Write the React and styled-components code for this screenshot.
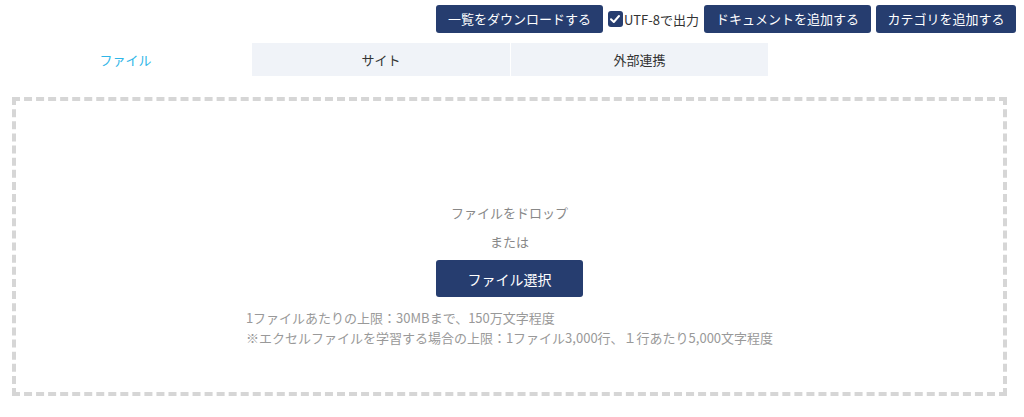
import styled, { createGlobalStyle } from 'styled-components';

const GlobalStyle = createGlobalStyle`
  body {
    margin: 0;
    background: #fff;
    font-family: "Noto Sans CJK JP", "Noto Sans", sans-serif;
    color: #333;
  }
`;

const App = () => {
  return (
    <Page>
      <GlobalStyle />
      <Toolbar>
        <NavButton $w={167}>一覧をダウンロードする</NavButton>
        <CheckLabel>
          <CheckBox>
            <svg width="12" height="12" viewBox="0 0 12 12">
              <path d="M2 6.2 L4.8 9 L10 3" fill="none" stroke="#fff" strokeWidth="2" strokeLinecap="round" strokeLinejoin="round" />
            </svg>
          </CheckBox>
          UTF-8で出力
        </CheckLabel>
        <NavButton $w={167}>ドキュメントを追加する</NavButton>
        <NavButton $w={140}>カテゴリを追加する</NavButton>
      </Toolbar>

      <Tabs>
        <Tab $active>ファイル</Tab>
        <Tab>サイト</Tab>
        <Tab>外部連携</Tab>
      </Tabs>

      <DropZone>
        <DropText>ファイルをドロップ</DropText>
        <DropText $gap>または</DropText>
        <SelectButton>ファイル選択</SelectButton>
        <Notes>
          <div>1ファイルあたりの上限：30MBまで、150万文字程度</div>
          <div>※エクセルファイルを学習する場合の上限：1ファイル3,000行、１行あたり5,000文字程度</div>
        </Notes>
      </DropZone>
    </Page>
  );
};

export default App;

const Page = styled.div`
  width: 1024px;
  height: 417px;
  overflow: hidden;
`;

const Toolbar = styled.div`
  display: flex;
  justify-content: flex-end;
  align-items: center;
  gap: 5px;
  padding: 5px 8px 0 0;
  height: 28px;
`;

const NavButton = styled.button`
  width: ${(p) => p.$w}px;
  height: 28px;
  padding: 0;
  background: #263d6f;
  color: #fff;
  border: none;
  border-radius: 3px;
  font-family: inherit;
  font-size: 13px;
  line-height: 28px;
  white-space: nowrap;
  cursor: pointer;
`;

const CheckLabel = styled.label`
  display: flex;
  align-items: center;
  gap: 1px;
  width: 91px;
  font-size: 13px;
  color: #333;
  white-space: nowrap;
`;

const CheckBox = styled.span`
  display: inline-flex;
  align-items: center;
  justify-content: center;
  width: 16px;
  height: 16px;
  border-radius: 3px;
  background: #263d6f;
`;

const Tabs = styled.div`
  display: grid;
  grid-template-columns: 251px 259px 258px;
  margin-top: 10px;
  height: 33px;
`;

const Tab = styled.div`
  display: flex;
  align-items: center;
  justify-content: center;
  font-size: 13px;
  color: ${(p) => (p.$active ? '#2fb6e8' : '#333')};
  background: ${(p) => (p.$active ? '#fff' : '#f0f3f8')};
  border-left: ${(p) => (p.$active ? 'none' : '1px solid #fff')};
`;

const DropZone = styled.div`
  margin: 21px 17px 0 12px;
  box-sizing: border-box;
  height: 299px;
  border: 4px dashed #d6d6d6;
  display: flex;
  flex-direction: column;
  align-items: center;
  padding-top: 102px;
`;

const DropText = styled.div`
  font-size: 13px;
  line-height: 20px;
  color: #888;
  margin-top: ${(p) => (p.$gap ? '9px' : '0')};
`;

const SelectButton = styled.button`
  margin-top: 8px;
  width: 147px;
  height: 37px;
  background: #263d6f;
  color: #fff;
  border: none;
  border-radius: 3px;
  font-family: inherit;
  font-size: 14px;
  cursor: pointer;
`;

const Notes = styled.div`
  margin-top: 11px;
  font-size: 13px;
  line-height: 20px;
  color: #999;
  text-align: left;
  white-space: nowrap;
`;
